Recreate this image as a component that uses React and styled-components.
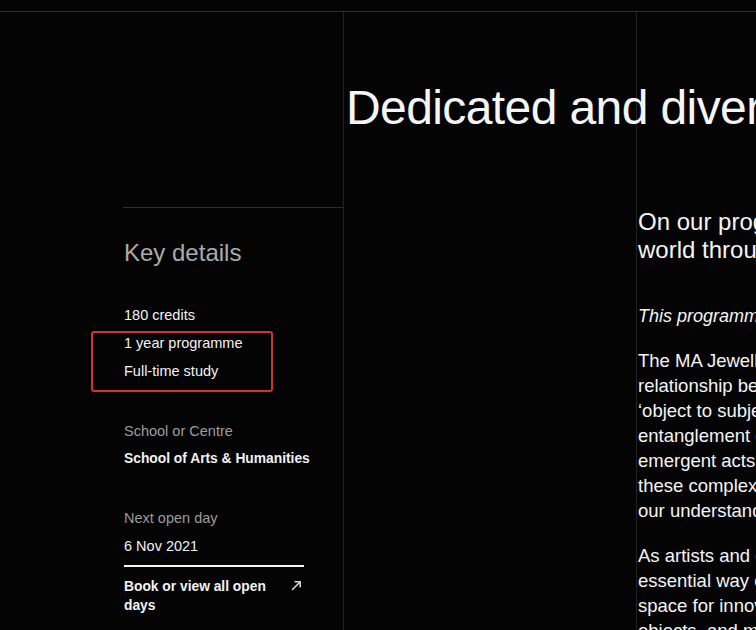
import React from 'react';
import styled, { createGlobalStyle } from 'styled-components';

const GlobalStyle = createGlobalStyle`
  html, body {
    margin: 0;
    padding: 0;
    background: #040404;
    overflow: hidden;
  }
  body {
    font-family: "Liberation Sans", Arial, sans-serif;
    color: #f2f2f2;
  }
`;

const App = () => {
  return (
    <Page>
      <GlobalStyle />
      <Grid>
        <HeroSpacer />
        <Rule col={2} />
        <Rule col={3} />
        <Heading>Dedicated and diverse practices</Heading>

        <Sidebar>
          <SideTitle>Key details</SideTitle>
          <List>
            <Item>180 credits</Item>
            <Highlight>
              <Item>1 year programme</Item>
              <Item>Full-time study</Item>
            </Highlight>
          </List>

          <Group>
            <Label>School or Centre</Label>
            <Value bold>School of Arts &amp; Humanities</Value>
          </Group>

          <Group gap={31}>
            <Label>Next open day</Label>
            <Value>6 Nov 2021</Value>
            <OpenDayLink href="#">
              <span>Book or view all open days</span>
              <svg width="11" height="11" viewBox="0 0 11 11" fill="none">
                <path d="M1.5 9.5 L9 2" stroke="#d8d8d8" strokeWidth="1.6" strokeLinecap="round" />
                <path d="M4.2 1.8 H9.2 V6.8" stroke="#d8d8d8" strokeWidth="1.6" strokeLinecap="round" strokeLinejoin="round" />
              </svg>
            </OpenDayLink>
          </Group>
        </Sidebar>

        <Content>
          <Intro>
            On our programme, we explore the
            <br />
            world through objects and the materials that shape them.
          </Intro>
          <Note>This programme is part of the School of Arts &amp; Humanities.</Note>
          <Paragraph>
            The MA Jewellery &amp; Metal programme explores the
            <br />
            relationship between people and things, from
            <br />
            ‘object to subject’, examining the material
            <br />
            entanglement of making, wearing and using, and the
            <br />
            emergent acts that jewellery and metal enable. Through
            <br />
            these complex relationships, we seek to expand
            <br />
            our understanding of what jewellery and metal can be.
          </Paragraph>
          <Paragraph>
            As artists and designers, we see making as an
            <br />
            essential way of thinking, and the studio as a
            <br />
            space for innovation in materials, processes,
            <br />
            objects, and meaning.
          </Paragraph>
        </Content>
      </Grid>
    </Page>
  );
};

const Page = styled.div`
  padding-top: 11px;
  width: 756px;
  height: 630px;
  box-sizing: border-box;
  overflow: hidden;
`;

const Grid = styled.div`
  display: grid;
  grid-template-columns: 343px 293px 1fr;
  grid-template-rows: 196px 1fr;
  border-top: 1px solid #2e2e2e;
  min-height: 618px;
`;

const HeroSpacer = styled.div`
  grid-column: 1;
  grid-row: 1;
  margin-left: 123px;
  border-bottom: 1px solid #2f2f2f;
`;

const Rule = styled.div`
  grid-column: ${(p) => p.col};
  grid-row: 1 / 3;
  border-left: 1px solid #222;
`;

const Heading = styled.h1`
  grid-column: 2 / 4;
  grid-row: 1;
  align-self: start;
  margin: 72px 0 0;
  padding-left: 3px;
  font-size: 48px;
  line-height: 1;
  font-weight: 400;
  letter-spacing: -0.6px;
  color: #f4f6f6;
  white-space: nowrap;
  z-index: 1;
`;

const Sidebar = styled.aside`
  grid-column: 1;
  grid-row: 2;
  padding-left: 124px;
`;

const SideTitle = styled.h2`
  margin: 30px 0 0;
  font-size: 24px;
  line-height: 29px;
  font-weight: 400;
  color: #ababab;
`;

const List = styled.div`
  margin-top: 34px;
`;

const Item = styled.div`
  font-size: 14.5px;
  line-height: 28px;
  color: #f2f2f2;
`;

const Highlight = styled.div`
  position: relative;

  &::after {
    content: '';
    position: absolute;
    left: -33px;
    top: 2px;
    width: 182px;
    height: 61px;
    box-sizing: border-box;
    border: 2px solid #d2312e;
    border-radius: 3px;
  }
`;

const Group = styled.div`
  margin-top: ${(p) => p.gap || 32}px;
`;

const Label = styled.div`
  font-size: 14.5px;
  line-height: 28px;
  color: #9c9c9c;
`;

const Value = styled.div`
  font-size: ${(p) => (p.bold ? 13.8 : 14.5)}px;
  line-height: 28px;
  font-weight: ${(p) => (p.bold ? 700 : 400)};
  color: #f2f2f2;
`;

const OpenDayLink = styled.a`
  display: flex;
  justify-content: space-between;
  align-items: flex-start;
  width: 180px;
  margin-top: 5px;
  padding-top: 10px;
  border-top: 2px solid #f4f4f4;
  color: #f2f2f2;
  text-decoration: none;
  font-size: 13.8px;
  font-weight: 700;
  line-height: 19px;

  span {
    max-width: 150px;
  }

  svg {
    margin-top: 3px;
    margin-right: 2px;
  }
`;

const Content = styled.main`
  grid-column: 3;
  grid-row: 2;
  padding-left: 2px;
  white-space: nowrap;
  color: #f4f4f4;
`;

const Intro = styled.p`
  margin: 0;
  font-size: 24px;
  line-height: 28px;
`;

const Note = styled.p`
  margin: 40px 0 0;
  font-size: 18px;
  line-height: 25px;
  font-style: italic;
`;

const Paragraph = styled.p`
  margin: 19px 0 0;
  font-size: 18.5px;
  line-height: 25px;

  & + & {
    margin-top: 20px;
  }
`;

export default App;
